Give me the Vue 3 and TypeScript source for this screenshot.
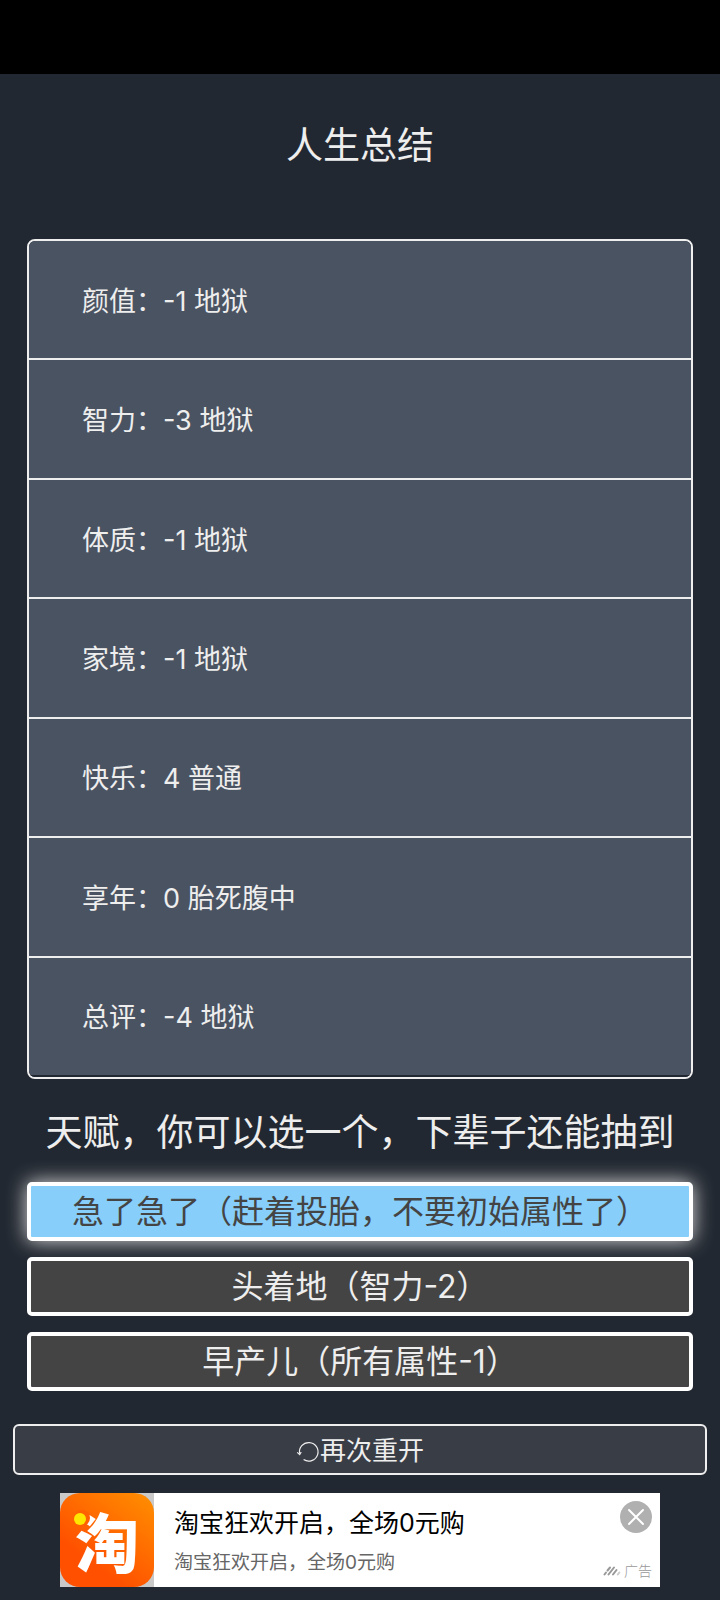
<script setup lang="ts">
import { ref } from 'vue'

interface Stat {
  name: string
  value: number
  grade: string
}

const stats: Stat[] = [
  { name: '颜值', value: -1, grade: '地狱' },
  { name: '智力', value: -3, grade: '地狱' },
  { name: '体质', value: -1, grade: '地狱' },
  { name: '家境', value: -1, grade: '地狱' },
  { name: '快乐', value: 4, grade: '普通' },
  { name: '享年', value: 0, grade: '胎死腹中' },
  { name: '总评', value: -4, grade: '地狱' },
]

const talents: string[] = [
  '急了急了（赶着投胎，不要初始属性了）',
  '头着地（智力-2）',
  '早产儿（所有属性-1）',
]

const selected = ref(0)
const adOpen = ref(true)
</script>

<template>
  <div class="screen">
    <div class="status-bar"></div>
    <main class="summary">
      <h1 class="title">人生总结</h1>
      <ul class="stats">
        <li v-for="s in stats" :key="s.name" class="stat">{{ s.name }}：{{ s.value }} {{ s.grade }}</li>
      </ul>
      <h2 class="subtitle">天赋，你可以选一个，下辈子还能抽到</h2>
      <div class="talents">
        <button
          v-for="(t, i) in talents"
          :key="t"
          type="button"
          class="talent"
          :class="{ selected: i === selected }"
          :aria-pressed="i === selected"
          @click="selected = i"
        >{{ t }}</button>
      </div>
    </main>
    <button type="button" class="restart">
      <svg class="restart-icon" viewBox="0 0 24 24" aria-hidden="true">
        <path d="M3.6 14.6A9.3 9.3 0 1 1 7.6 20.6" fill="none" stroke="currentColor" stroke-width="1.2" />
        <path d="M1.2 13.4L3.7 15.6L5.2 13" fill="none" stroke="currentColor" stroke-width="1.2" />
      </svg>
      <span>再次重开</span>
    </button>
    <aside v-if="adOpen" class="ad">
      <svg class="ad-logo" viewBox="0 0 94 94" aria-hidden="true">
        <defs>
          <linearGradient id="logo-fill" x1="1" y1="0" x2="0.4" y2="0.8">
            <stop offset="0" stop-color="#ff9000" />
            <stop offset="1" stop-color="#ff5000" />
          </linearGradient>
        </defs>
        <rect width="94" height="94" fill="#c9c9c9" />
        <rect width="94" height="94" rx="20" fill="url(#logo-fill)" />
        <text x="47" y="74" text-anchor="middle" class="logo-text">淘</text>
        <circle cx="22" cy="25" r="8" fill="#ff6000" />
        <circle cx="20" cy="26" r="6" fill="#ffe600" />
      </svg>
      <a class="ad-copy" href="#">
        <span class="ad-title">淘宝狂欢开启，全场0元购</span>
        <span class="ad-text">淘宝狂欢开启，全场0元购</span>
      </a>
      <div class="ad-side">
        <button type="button" class="ad-close" aria-label="关闭广告" @click="adOpen = false">
          <svg viewBox="0 0 32 32" aria-hidden="true">
            <path d="M9 9L23 23M23 9L9 23" stroke="#fff" stroke-width="2" stroke-linecap="round" />
          </svg>
        </button>
        <span class="ad-mark">
          <svg class="ad-mark-icon" viewBox="0 0 18 10" aria-hidden="true">
            <g stroke="#999" stroke-width="2" stroke-linecap="round">
              <path d="M1.5 8.5L3 6.5M4.5 4.5L7 1.5M5.5 8.5L11 1.5M10 8.5L13.5 4" />
              <path d="M14.8 8.5L16.4 6.5" stroke="#ccc" />
            </g>
          </svg>
          <span>广告</span>
        </span>
      </div>
    </aside>
  </div>
</template>

<style>
body {
  margin: 0;
  background: #222831;
}
</style>

<style scoped>
.screen {
  display: flex;
  flex-direction: column;
  min-height: 100vh;
  box-sizing: border-box;
  background: #222831;
  color: #eee;
  font-family: Inter, "Noto Sans CJK SC", sans-serif;
}

button {
  font-family: inherit;
  cursor: pointer;
}

.status-bar {
  height: 74px;
  background: #000;
}

.summary {
  display: flex;
  flex-direction: column;
  padding: 0 27px;
}

.title,
.subtitle {
  margin: 0;
  font-size: 37px;
  font-weight: 400;
  line-height: 56px;
  text-align: center;
}

.title {
  padding: 44px 0 65px;
}

.subtitle {
  padding: 26px 0 21px;
}

.stats {
  display: grid;
  grid-auto-rows: 1fr;
  min-height: 840px;
  box-sizing: border-box;
  margin: 0;
  padding: 0;
  list-style: none;
  border: 2px solid #eee;
  border-radius: 8px;
  overflow: hidden;
}

.stat {
  display: flex;
  align-items: center;
  padding: 4px 53px 0;
  border-bottom: 2px solid #eee;
  background: #4a5361;
  font-size: 27px;
  line-height: 40px;
}

.stat:last-child {
  border-bottom-color: #222831;
}

.talents {
  display: flex;
  flex-direction: column;
  gap: 16px;
}

.talent {
  padding: 0 8px;
  border: 4px solid #fff;
  border-radius: 5px;
  background: #444;
  color: #eee;
  font-size: 32px;
  line-height: 51px;
}

.talent.selected {
  background: #87cefa;
  color: #444;
  box-shadow: 0 0 20px #ddd;
}

.restart {
  display: flex;
  align-items: center;
  justify-content: center;
  margin: 33px 13px 18px;
  padding: 2px 0 0;
  border: 2px solid #eee;
  border-radius: 6px;
  background: #393d46;
  color: #eee;
  font-size: 26px;
  line-height: 45px;
}

.restart-icon {
  width: 24px;
  height: 24px;
}

.ad {
  display: flex;
  width: 84%;
  max-width: 600px;
  margin: 0 auto;
  background: #fff;
}

.ad-logo {
  flex: none;
  width: 94px;
  height: 94px;
}

.logo-text {
  fill: #fff;
  font-family: "Noto Sans CJK SC", sans-serif;
  font-size: 64px;
  font-weight: 900;
}

.ad-copy {
  display: flex;
  flex: 1;
  flex-direction: column;
  justify-content: center;
  gap: 8px;
  padding: 2px 0 0 20px;
  color: #000;
  text-decoration: none;
}

.ad-title {
  font-size: 25px;
  line-height: 36px;
}

.ad-text {
  color: #666;
  font-size: 19px;
  line-height: 28px;
}

.ad-side {
  display: flex;
  flex-direction: column;
  align-items: flex-end;
  justify-content: space-between;
  padding: 8px;
}

.ad-close {
  width: 32px;
  height: 32px;
  padding: 0;
  border: 0;
  border-radius: 50%;
  background: #b0b0b0;
}

.ad-close svg {
  display: block;
}

.ad-mark {
  display: flex;
  align-items: center;
  gap: 3px;
  color: #999;
  font-size: 14px;
  font-weight: 300;
  line-height: 16px;
}

.ad-mark-icon {
  width: 18px;
  height: 10px;
}
</style>
